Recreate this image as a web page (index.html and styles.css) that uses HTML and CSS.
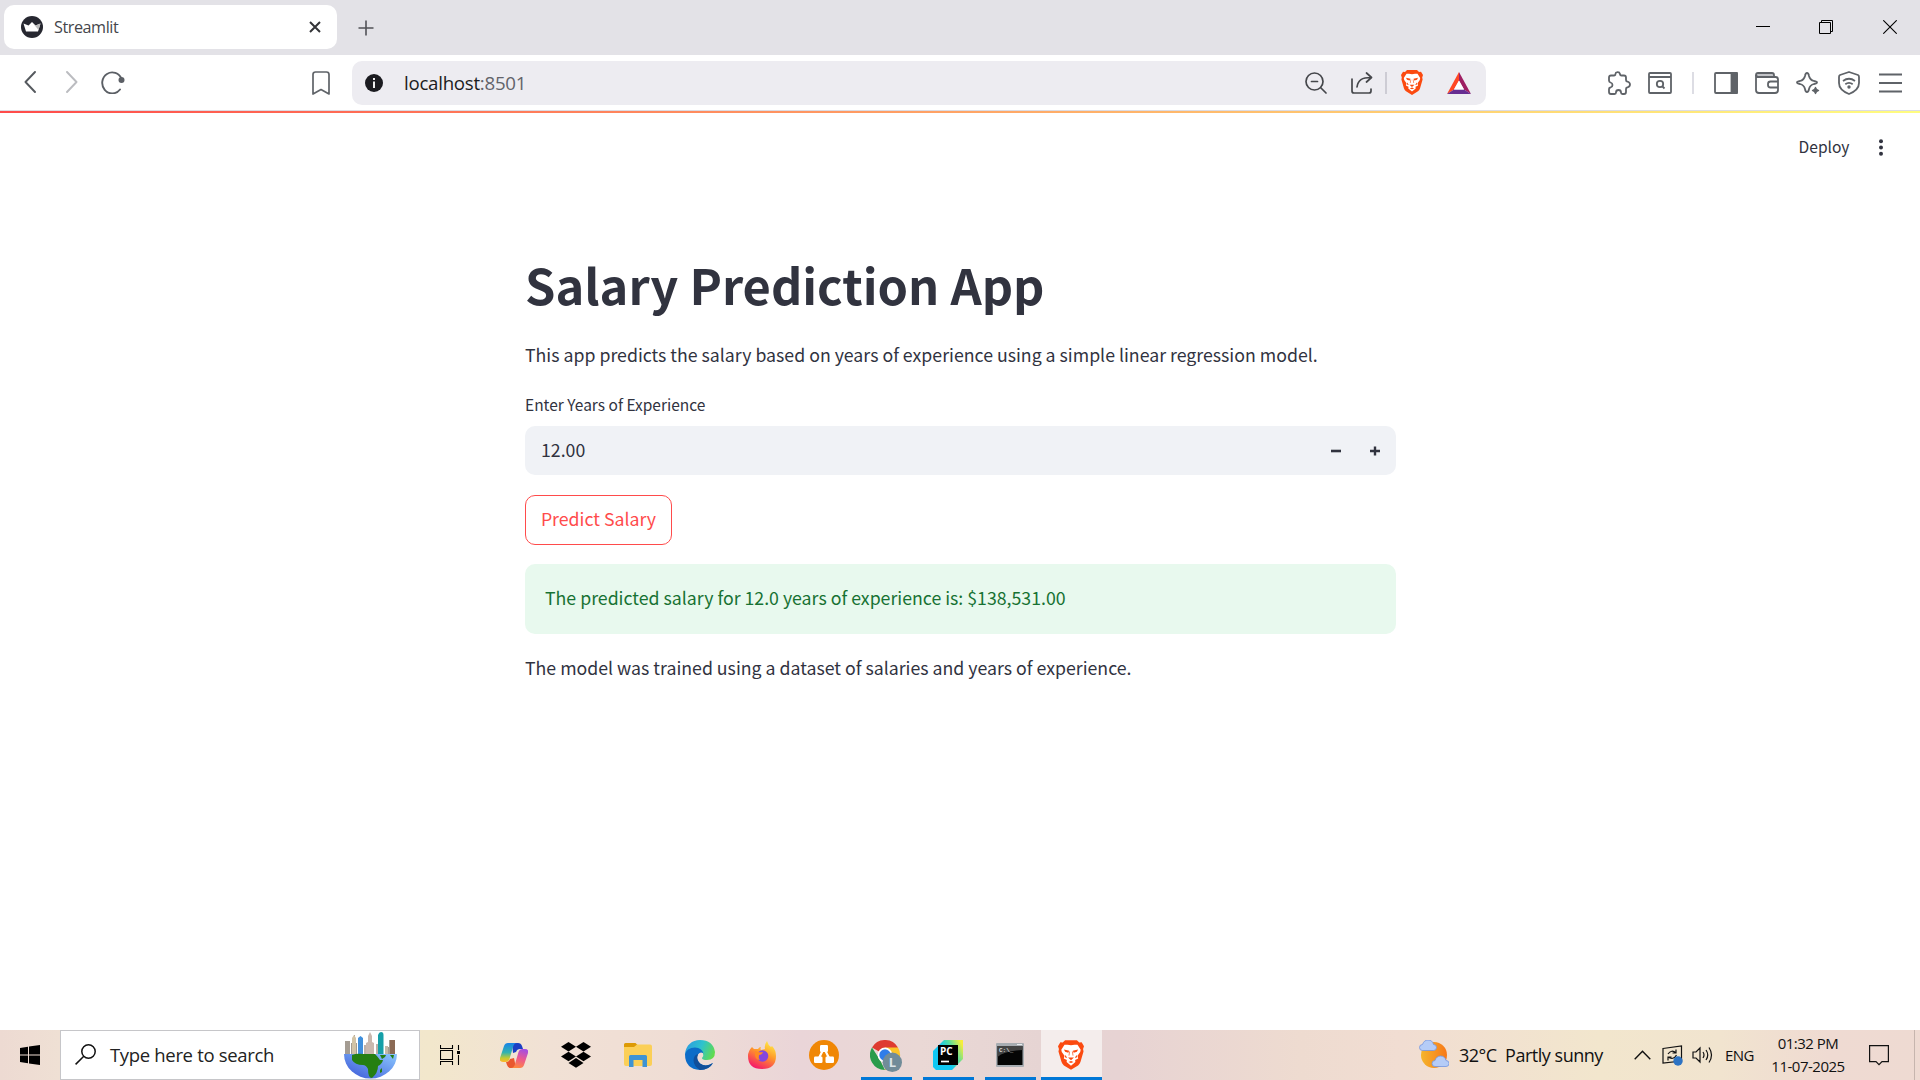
FILE: index.html
```html
<!DOCTYPE html>
<html lang="en">
<head>
<meta charset="utf-8">
<title>Streamlit</title>
<link rel="stylesheet" href="styles.css">
</head>
<body>
<div class="screen">
  <header class="tabstrip">
    <div class="tab">
      <svg class="favicon" width="22" height="22" viewBox="0 0 22 22"><circle cx="11" cy="11" r="11" fill="#262730"/><path d="M2.500 7.500 7.500 9.500 11 6l3.500 3.500 5-2L17 15.500H5Z" fill="#fff"/><path d="M11 6l3.500 3.500 5-2L17.500 14Z" fill="#bbb"/></svg>
      <span class="tab-title">Streamlit</span>
      <svg class="tab-close" width="12" height="12" viewBox="0 0 12 12"><path d="M1 1l10 10M11 1 1 11" stroke="#333438" stroke-width="2"/></svg>
    </div>
    <svg class="newtab" width="16" height="16" viewBox="0 0 16 16"><path d="M8 .5v15M.5 8h15" stroke="#515257" stroke-width="1.600"/></svg>
    <div class="winctl">
      <svg width="14" height="14" viewBox="0 0 14 14"><path d="M0 6.500h14" stroke="#000"/></svg>
      <svg width="14" height="14" viewBox="0 0 14 14" fill="none" stroke="#000"><path d="M.5 2.500h11v11H.5zM2.500 2.500v-2h11v11h-2"/></svg>
      <svg width="14" height="14" viewBox="0 0 14 14"><path d="M.3.3l13.400 13.400M13.700.3.3 13.700" stroke="#000" stroke-width="1.100"/></svg>
    </div>
  </header>

  <nav class="toolbar">
    <svg class="t-back" width="12" height="22" viewBox="0 0 12 22" fill="none" stroke="#55595e" stroke-width="1.900" stroke-linecap="round" stroke-linejoin="round"><path d="M11 1 1.500 11 11 21"/></svg>
    <svg class="t-fwd" width="12" height="22" viewBox="0 0 12 22" fill="none" stroke="#bbbcc0" stroke-width="1.900" stroke-linecap="round" stroke-linejoin="round"><path d="M1 1l9.500 10L1 21"/></svg>
    <svg class="t-reload" width="24" height="24" viewBox="0 0 24 24" fill="none" stroke="#5b5f65" stroke-width="1.900" stroke-linecap="round"><path d="M20.500 9A10 10.500 0 1 0 19 19.500"/><circle cx="20.500" cy="10" r="3" fill="#5b5f65" stroke="none"/></svg>
    <svg class="t-mark" width="18" height="24" viewBox="0 0 18 24" fill="none" stroke="#5f6368" stroke-width="1.700" stroke-linejoin="round"><path d="M1 3.500Q1 1 3.500 1h11Q17 1 17 3.500V23l-8-4.500L1 23Z"/></svg>
    <div class="address">
      <svg class="info" width="18" height="18" viewBox="0 0 18 18"><circle cx="9" cy="9" r="9" fill="#1b1b20"/><path d="M9 4v2M9 7.500V14" stroke="#eee" stroke-width="2"/></svg>
      <span class="url">localhost<span class="port">:8501</span></span>
      <svg class="a-zoom" width="22" height="22" viewBox="0 0 22 22" fill="none" stroke="#45474b" stroke-width="1.700" stroke-linecap="round"><circle cx="9.500" cy="9.500" r="8.500"/><path d="M16 16l5 5M6.500 9.500h6"/></svg>
      <svg class="a-share" width="22" height="22" viewBox="0 0 22 22" fill="none" stroke="#45474b" stroke-width="1.700" stroke-linecap="round" stroke-linejoin="round"><path d="M1 7v12q0 2 2 2h15q2 0 2-2v-2M6 15C7 8 11 5.500 20 5.500M15.500 1 20.500 5.500 15.500 10"/></svg>
      <i class="a-sep"></i>
      <svg class="a-brave" width="22" height="25" viewBox="0 0 22 25"><use href="#lion"/></svg>
      <svg class="a-bat" width="24" height="22" viewBox="0 0 24 22"><path d="M12 0 0 22l7-4.500 5-9Z" fill="#ff4724"/><path d="M12 0l12 22-7-4.500-5-9Z" fill="#9e1f63"/><path d="M0 22h24l-7-4.500H7Z" fill="#662d91"/><path d="M12 8.500 7 17.500h10Z" fill="#fff"/></svg>
    </div>
    <div class="tools">
      <svg class="ic-puzzle" width="24" height="24" viewBox="0 0 24 24"><path d="M4 4.500H7q1.500 0 1.300-1.200A2.400 2.400 0 0 1 13 3q0 1.500 1.500 1.500H17q2 0 2 2V9q0 1.300 1.200 1.500 2.800.7 2.800 3T20.200 16.500Q19 16.700 19 18v3q0 2-2 2h-1.500q-1.500 0-1.500-1.500a2.500 2.500 0 0 0-5 0Q9 23 7.500 23H4q-2 0-2-2v-3q0-1.200 1.500-1.500 2-.5 2-2.500t-2-2.500Q2 11 2 9.500v-3q0-2 2-2Z"/></svg>
      <svg class="ic-find" width="24" height="22" viewBox="0 0 24 22"><path d="M2 1h20q1 0 1 1v18q0 1-1 1H2q-1 0-1-1V2q0-1 1-1ZM1 5h22"/><circle cx="12" cy="12" r="3.200"/><path d="M14 14l2.500 2.500"/></svg>
      <i class="tool-sep"></i>
      <svg class="ic-side" width="24" height="22" viewBox="0 0 24 22"><rect x="1" y="1" width="22" height="20" rx="1"/><path d="M17.500 1H23v20h-5.500Z" fill="#5f6368"/></svg>
      <svg class="ic-wallet" width="24" height="22" viewBox="0 0 24 22"><path d="M1 3q0-2 2-2h14q2 0 2 2v2H2Z" fill="#c3c4c8"/><path d="M1 3v15q0 3 3 3h16q3 0 3-3V7.500Q23 5 20.500 5H3Q1 5 1 3M23 9.500h-7.500q-2.500 0-2.500 2.500v1q0 2.500 2.500 2.500H23Z"/></svg>
      <svg class="ic-spark" width="24" height="24" viewBox="0 0 24 24"><path d="M11 2q1.500 0 2 3 1 4 5 5 3 .5 3 1.500T18 13q-4 1-5 5-.5 3-2 3t-2-3q-1-4-5-5-3-.5-3-1.500T4 10q4-1 5-5 .5-3 2-3Z"/><path d="M19.500 15.500l1.200 2.800 2.800 1.200-2.800 1.200-1.200 2.800-1.200-2.800-2.800-1.200 2.800-1.200Z" fill="#5f6368" stroke="#fff" stroke-width="3" paint-order="stroke"/><path d="M19.500 16l1 2.500 2.500 1-2.500 1-1 2.500-1-2.500-2.500-1 2.500-1Z" fill="#5f6368" stroke-width="1"/></svg>
      <svg class="ic-shield" width="22" height="24" viewBox="0 0 22 24"><path d="M11 1l9 3q1 .5 1 2v6q0 7-10 11Q1 19 1 12V6q0-1.500 1-2ZM5 10q6-4.500 12 0M7.300 13.200q3.700-2.700 7.400 0"/><circle cx="11" cy="16" r=".8"/></svg>
      <svg class="ic-menu" width="23" height="20" viewBox="0 0 23 20"><path d="M0 1.500h23M0 10h23M0 18.500h23"/></svg>
    </div>
  </nav>

  <main class="app">
    <div class="appbar">
      <span class="deploy">Deploy</span>
      <svg width="4" height="17" viewBox="0 0 4 17" fill="#31333f"><circle cx="2" cy="2.200" r="2"/><circle cx="2" cy="8.500" r="2"/><circle cx="2" cy="14.800" r="2"/></svg>
    </div>
    <section class="column">
      <h1>Salary Prediction App</h1>
      <p class="intro">This app predicts the salary based on years of experience using a simple linear regression model.</p>
      <label class="label">Enter Years of Experience</label>
      <div class="number">
        <span class="value">12.00</span>
        <svg width="10" height="10" viewBox="0 0 10 10"><path d="M0 5h10" stroke="#31333f" stroke-width="2.600"/></svg>
        <svg width="10" height="10" viewBox="0 0 10 10"><path d="M0 5h10M5 .5v9" stroke="#31333f" stroke-width="2.400"/></svg>
      </div>
      <button class="predict">Predict Salary</button>
      <div class="alert"><span>The predicted salary for 12.0 years of experience is: $138,531.00</span></div>
      <p class="outro">The model was trained using a dataset of salaries and years of experience.</p>
    </section>
  </main>

  <footer class="taskbar">
    <div class="start"><svg width="20" height="20" viewBox="0 0 20 20"><path d="M0 3l8-1.200V9.500H0ZM9 1.600 20 0v9.500H9ZM0 10.500h8v7.800L0 17ZM9 10.500h11V20L9 18.400Z"/></svg></div>
    <div class="search">
      <svg class="s-lens" width="21" height="21" viewBox="0 0 21 21" fill="none" stroke="#111" stroke-width="1.500"><circle cx="13.500" cy="7.500" r="6.700"/><path d="M8.800 12.200.6 20.400"/></svg>
      <span class="s-text">Type here to search</span>
      <svg class="s-globe" width="54" height="48" viewBox="0 0 54 48">
        <defs><linearGradient id="sea" x1="0" x2="1" y1="1" y2="0"><stop offset="0" stop-color="#3a55d6"/><stop offset="1" stop-color="#8cc8ff"/></linearGradient></defs>
        <path d="M2 23V10h5v13M8 23V12h3V4h1v8h2v11M44 23v-7h2V9h6v14" fill="#a49c92"/>
        <path d="M9 23V7l2-3 2 3v16Z" fill="#d2c3a6"/><path d="M15 23V7l2.500-2L20 7v16Z" fill="#3f8fdc"/><path d="M21 23v-9h5v9M33 23V13h4v10" fill="#bdb0a8"/><path d="M23 23V12l2-1V5l2-4 2 4v6l2 1v11Z" fill="#c9b8ae"/><path d="M35 23V4q1-3 3-3 2.500 0 2.500 3v19Z" fill="#159fa8"/><path d="M42 23v-8h3v8" fill="#c5b9a8"/><path d="M47 23V9h5v14" fill="#8b6a55"/>
        <path d="M1 23h53a26.500 24.500 0 0 1-53 0Z" fill="url(#sea)"/>
        <path d="M9 24q5-2 11-1l12 0q3 3 5 6 2 0 3 0-1 4-5 6 0 7-6 12-4 0-4-9-2-4-5-4-8 0-11-5Z" fill="#257f12"/><path d="M37 24h6l-1 2-3 2ZM47 24h4l-1 4ZM37 39l2-2 0 4-2 1Z" fill="#257f12"/>
      </svg>
    </div>
    <div class="apps">
      <div class="app-btn taskview"><svg width="20" height="20" viewBox="0 0 20 20" fill="none" stroke="#000" stroke-width="1.100"><path d="M.5 0v3.500h12V0M.5 5.500h12v9H.5ZM.5 20v-3.500h12V20M18.500 0v5M18.500 10v10"/><path d="M17 6h3v3h-3Z" fill="#000" stroke="none"/></svg></div>
      <div class="app-btn"><svg width="28" height="25" viewBox="0 0 28 25">
        <defs><linearGradient id="c1" x1="0" x2="0" y1="0" y2="1"><stop offset="0" stop-color="#1783e8"/><stop offset=".5" stop-color="#32b3b0"/><stop offset=".8" stop-color="#c5cb30"/><stop offset="1" stop-color="#ffb72c"/></linearGradient><linearGradient id="c2" x1=".6" x2=".3" y1="0" y2="1"><stop offset="0" stop-color="#a64ee0"/><stop offset=".5" stop-color="#ee5a8c"/><stop offset="1" stop-color="#ff8a3c"/></linearGradient></defs>
        <path d="M12 0h6q3 0 4 3l1 3h-3q-3 0-4 3l-3 1Z" fill="#1b3fc4"/><path d="M16 25h-6q-2 0-3-3l-1-3q3 0 4-3l4-1Z" fill="#e9582f"/>
        <path d="M8 0h9q-3 0-4 4L9.500 16q-1 3-4 3H3q-4 0-3-4L4 3q1-3 4-3Z" fill="url(#c1)"/><path d="M20 25h-9q3 0 4-4L18.500 9q1-3 4-3H25q4 0 3 4l-4 12q-1 3-4 3Z" fill="url(#c2)"/></svg></div>
      <div class="app-btn"><svg width="30" height="26" viewBox="0 0 30 26"><path d="M7.500 0 15 4.700 7.500 9.500 0 4.700ZM22.500 0 30 4.700l-7.500 4.800L15 4.700ZM7.500 9.700 15 14.500l-7.500 4.800L0 14.500ZM22.500 9.700l7.500 4.800-7.500 4.800L15 14.500ZM15 16l7.500 4.900L15 25.700l-7.500-4.800Z"/></svg></div>
      <div class="app-btn"><svg class="folder" width="28" height="24" viewBox="0 0 28 24"><path d="M0 1.500Q0 0 1.500 0h10L14 2.500 11.500 5H0Z" fill="#dd9a05"/><path d="M0 4h10l3-2.500h13q2 0 2 2V21q0 2-2 2H2q-2 0-2-2Z" fill="#fbcf57"/><path d="M5 24V13.500Q5 12 6.500 12h15q1.500 0 1.500 1.500V24h-4.500v-7h-9v7Z" fill="#3e93d4"/></svg></div>
      <div class="app-btn"><svg width="30" height="30" viewBox="0 0 30 30">
        <defs><linearGradient id="e1" x1="0" x2="1" y1=".3" y2=".6"><stop offset="0" stop-color="#2c9de0"/><stop offset=".5" stop-color="#2ec2ce"/><stop offset="1" stop-color="#62dc4b"/></linearGradient></defs>
        <path d="M0 14C1 5 7 0 15 0q13 0 15 12 0 8-8 8-5 0-5-2 2-2 1-5L9 8Z" fill="url(#e1)"/><path d="M0 14Q2 7.500 10 7.500q7 .5 8.500 6-3-2.500-5.500 1-3 5 2 9 6 4 13-.5-4 7-13 7Q0 29 0 14Z" fill="#0c6cc8"/><path d="M13 14q-4 1-4.500 6 0 6 6.500 10 9 0 13-7-7 4.500-13 .5-4-4-2-9.500Z" fill="#114f9a"/></svg></div>
      <div class="app-btn"><svg width="28" height="28" viewBox="0 0 28 28">
        <defs><linearGradient id="f1" x1=".8" x2=".3" y1="0" y2="1"><stop offset="0" stop-color="#fff04a"/><stop offset=".45" stop-color="#ff9a2a"/><stop offset="1" stop-color="#f5156c"/></linearGradient></defs>
        <path d="M4 6l2 2h4q1-2 3-2-1 2 0 3l4-1q-1-4 2-8 1 4 4 6l1-1q4 4 4 10 0 13-14 13T0 15q0-5 4-9Z" fill="url(#f1)"/><circle cx="14.500" cy="15" r="5.800" fill="#8545dc"/><path d="M7 10q4 2 8 1-1 3-4 3-1 3 1 5-6 0-5-9Z" fill="#ff8a22"/></svg></div>
      <div class="app-btn"><svg width="30" height="30" viewBox="0 0 30 30"><circle cx="15" cy="15" r="15" fill="#f08705"/><path d="M15 8 9 20M15 8l6 12" stroke="#fff" stroke-width="2.200"/><rect x="11" y="5" width="8" height="7" rx="1.200" fill="#fff"/><rect x="5" y="16.500" width="8.500" height="6.500" rx="1.200" fill="#fff"/><rect x="16.500" y="16.500" width="8.500" height="6.500" rx="1.200" fill="#fff"/></svg></div>
      <div class="app-btn running"><svg class="chrome" width="32" height="32" viewBox="0 0 32 32"><path d="M15 15 2 7.500a15 15 0 0 1 26 0Z" fill="#de3b30"/><path d="M15 15V7.500h13A15 15 0 0 1 15 30Z" fill="#fbc428"/><path d="M2 7.500 10 20l5 10A15 15 0 0 1 2 7.500Z" fill="#2a9c4b"/><circle cx="15" cy="15" r="7.400" fill="#fff"/><circle cx="15" cy="15" r="5.700" fill="#2f7de9"/><circle cx="22.300" cy="22.300" r="9.700" fill="#718c99"/><text x="18.800" y="27" class="badge">L</text></svg></div>
      <div class="app-btn running"><svg width="30" height="30" viewBox="0 0 30 30">
        <defs><linearGradient id="p1" x1=".2" x2="1" y1=".6" y2=".2"><stop offset=".25" stop-color="#10c7f2"/><stop offset=".6" stop-color="#58dd9c"/><stop offset="1" stop-color="#f6ee3a"/></linearGradient></defs>
        <path d="M0 11 11 0h19v19L19 30H3l-3-3Z" fill="url(#p1)"/><rect x="5" y="5" width="20" height="20"/><path d="M8 21.500h8" stroke="#fff" stroke-width="1.700"/><text x="7" y="15" class="pc">PC</text></svg></div>
      <div class="app-btn running"><svg width="28" height="24" viewBox="0 0 28 24"><rect width="28" height="24" rx="1" fill="#a8adb2"/><rect x="1.500" y="3" width="25" height="19" fill="#050505"/><path d="M1.500 3h25v4Q8 8 1.500 14Z" fill="#444"/><path d="M21 1.500h5" stroke="#e9edf0"/><text x="3" y="9" class="cmd">C:\_</text></svg></div>
      <div class="app-btn running active"><svg width="26" height="30" viewBox="0 0 22 25"><g id="lion"><path d="M6 0h10l2 2 2-.2L22 5l-.8 2.500.4 2-2.600 9q-.5 1.700-2 2.800L11 25l-6-3.700q-1.500-1.100-2-2.800l-2.600-9 .4-2L0 5l2-3.200L4 2Z" fill="#fb4a10"/><path d="M8 3.800l3 .5 3-.5h2.500L19.200 8l-.4 2-2.300 3.200.6 2.300-2.600 1.300.2 1.700L11 21.500l-3.700-3 .2-1.700L4.900 15.500l.6-2.300L3.200 10 2.800 8l2.700-4.200Z" fill="#fff"/><path d="M5 7.800l4.500 1L8.700 10.500 6 9.800ZM17 7.800l-4.500 1 .8 1.700 2.700-.7ZM8.500 14.700h5L11 17ZM6.300 12.500l1.500 2.500-2-.5ZM15.700 12.500l-1.500 2.500 2-.5ZM8.800 18.500 11 17.600l2.200.9L11 19.200Z" fill="#fb4a10"/><path d="M9.800 9.500 9.300 13M12.200 9.500l.5 3.500" stroke="#fb4a10" stroke-width=".6"/></g></svg></div>
    </div>
    <div class="tray">
      <svg class="weather" width="30" height="28" viewBox="0 0 30 28"><defs><linearGradient id="sun" x1="0" x2="1"><stop offset="0" stop-color="#f5b52c"/><stop offset="1" stop-color="#f77818"/></linearGradient></defs><circle cx="15" cy="15" r="13" fill="url(#sun)"/><path id="cloud" d="M3.500 10.500a3 3 0 0 1 0-6Q5 0 9 0q4.500 0 5.500 4.500a3 3 0 0 1 0 6Z" fill="#b5ccf7" stroke="#7396df" stroke-width=".8"/><use href="#cloud" x="12.500" y="16"/></svg>
      <span class="w-text">32°C&nbsp; Partly sunny</span>
      <svg class="chev" width="17" height="10" viewBox="0 0 17 10" fill="none" stroke="#111" stroke-width="1.400"><path d="M.7 9.300 8.500 1.200l7.800 8.100"/></svg>
      <svg class="sync" width="21" height="21" viewBox="0 0 21 21" fill="none" stroke="#111" stroke-width="1.200"><path d="M1 3.500 19.500 1v15L1 18ZM6 9q3.500-5 8-1M14 4.500V8h-3.500M14.500 10q-3 5.500-8.500 2M6 15.500V12h3.500"/><circle cx="16" cy="16" r="4.700" fill="#2c73c4" stroke="none"/></svg>
      <svg class="vol" width="21" height="18" viewBox="0 0 21 18" fill="none" stroke="#111" stroke-width="1.200"><path d="M1 6h3l4-4v14l-4-4H1ZM11 6q2 3 0 6M14 4q3.500 5 0 10M17 1.500q5 7.500 0 15"/></svg>
      <span class="lang">ENG</span>
      <div class="clock"><span class="time">01:32 PM</span><span class="date">11-07-2025</span></div>
      <svg class="note" width="20" height="21" viewBox="0 0 20 21" fill="none" stroke="#111" stroke-width="1.200"><path d="M.6.6h18.800v16H13l-3 3-3-3H.6Z"/></svg>
      <i class="peek"></i>
    </div>
  </footer>
</div>
</body>
</html>
```
FILE: styles.css
```css
* { box-sizing: border-box; }
body { margin: 0; background: #fff; }
svg { display: block; flex: none; }
.screen { width: 1920px; height: 1080px; display: flex; flex-direction: column; overflow: hidden; font-family: "Open Sans", "Noto Sans", sans-serif; }

.tabstrip { height: 55px; background: #e3e2e7; display: flex; align-items: center; padding-left: 4px; flex: none; }
.tab { width: 333px; height: 44px; margin-bottom: 1px; background: #fff; border-radius: 10px; display: flex; align-items: center; padding: 0 16px 0 17px; }
.tab-title { font-size: 16.200px; letter-spacing: -.45px; color: #45464b; margin-left: 11px; flex: 1; }
.newtab { margin-left: 21px; }
.winctl { margin-left: auto; display: flex; gap: 49px; padding: 0 23px 2px 0; }
.winctl svg:last-child { margin-left: 1px; }

.toolbar { height: 56px; border-bottom: 1px solid #dcdce4; display: flex; align-items: center; padding-left: 24px; flex: none; }
.t-back, .t-fwd, .t-reload { margin-bottom: 1px; }
.t-fwd { margin-left: 30px; }
.t-reload { margin-left: 23px; }
.t-mark { margin-left: 187px; }
.address { width: 1134px; height: 44px; margin-left: 22px; border-radius: 10px; background: #edecf1; display: flex; align-items: center; padding-left: 13px; }
.url { margin-left: 21px; font-size: 18.700px; letter-spacing: -.27px; color: #1b1b20; }
.port { color: #62636a; }
.a-zoom { margin-left: auto; }
.a-share { margin-left: 24px; }
.a-sep { width: 2px; height: 22px; background: #cdccd4; margin-left: 12px; }
.a-brave { margin-left: 14px; }
.a-bat { margin: 0 15px 0 24px; }
.tools { display: flex; align-items: center; margin-left: 121px; }
.tools svg { fill: none; stroke: #5f6368; stroke-width: 1.800; stroke-linejoin: round; }
.ic-find { margin-left: 17px; }
.tool-sep { width: 2px; height: 22px; background: #dddde4; margin: 0 20px; }
.ic-wallet, .ic-spark { margin-left: 17px; }
.ic-shield { margin-left: 18px; }
.ic-menu { margin-left: 19px; }

.app { flex: 1; min-height: 0; color: #31333f; font-family: "Noto Sans CJK SC", sans-serif; border-top: 2px solid; border-image: linear-gradient(90deg, #ff4b4b, #fffd80) 1; }
.appbar { height: 69px; display: flex; justify-content: flex-end; align-items: center; padding-right: 37px; }
.deploy { font-size: 15.600px; line-height: 28px; margin: 0 29.500px 3px 0; }
.column { width: 871px; margin: 68px 0 0 525px; font-size: 17.730px; line-height: 32px; display: flex; flex-direction: column; align-items: flex-start; }
h1 { margin: 1px 0 -1px; font-size: 48.750px; line-height: 66px; font-weight: 700; white-space: nowrap; }
.intro, .outro { margin: 22px 0 0; white-space: nowrap; }
.label { font-size: 15.500px; line-height: 28px; margin-top: 20px; }
.number { align-self: stretch; height: 49px; margin-top: 8px; border-radius: 10px; background: #f0f2f6; display: flex; align-items: center; gap: 29px; padding: 0 16px; }
.value { flex: 1; padding-bottom: 3px; }
.predict { width: 147px; height: 50px; margin-top: 20px; padding: 0 0 4px; border: 1px solid #ff4b4b; border-radius: 10px; background: #fff; color: #ff4b4b; font: inherit; white-space: nowrap; }
.alert { align-self: stretch; height: 70px; margin-top: 19px; padding: 0 20px; border-radius: 10px; background: #e8f9ee; color: #177233; line-height: 67px; }
.outro { margin-top: 17px; }

.taskbar { height: 50px; flex: none; display: flex; color: #111; background: linear-gradient(90deg, #eddad2 0, #efe0d4 60px, #f2e7cc 430px, #f1e1d5 550px, #efddd5 680px, #ead5d8 800px, #ead8d5 920px, #e6d4d3 1040px, #e7d3d3 1120px, #eedbd0 1300px, #f1ddd2 1400px, #f2e6cd 1600px, #f1e4cf 1720px, #efdad2 1830px, #eedad2 1920px); }
.start { width: 60px; display: flex; align-items: center; justify-content: center; }
.search { width: 360px; height: 50px; background: #fff; border: 1px solid #c6c6c9; display: flex; align-items: center; padding: 0 22px 0 14px; }
.s-lens { margin-bottom: 1px; }
.s-text { margin: 0 0 2px 14px; font-size: 18.500px; letter-spacing: -.33px; color: #222; white-space: nowrap; }
.s-globe { margin-left: auto; }
.apps { display: flex; }
.app-btn { width: 52px; margin: 0 5px; padding-right: 2px; display: flex; align-items: center; justify-content: center; }
.running { border-bottom: 3px solid #0078d7; padding-top: 3px; width: 51px; margin-right: 6px; }
.chrome { margin-top: 2px; }
.taskview { margin: 0 8px 0 4px; padding-right: 0; }
.active { width: 61px; margin-left: -1px; background-color: #f4edec; }
.badge { font: 700 13px "Open Sans", sans-serif; fill: #dce6ea; }
.pc { font: 700 10px "Open Sans", sans-serif; fill: #fff; }
.cmd { font: 700 6px "Liberation Mono", monospace; fill: #ddd; }
.tray { margin-left: auto; display: flex; align-items: center; white-space: nowrap; }
.weather { margin: 0 1px 2px -1px; }
.w-text { font-size: 18px; letter-spacing: -.48px; margin-left: 9px; width: 146px; }
.chev { margin-left: 29px; }
.sync { margin-left: 11px; }
.vol { margin-left: 9px; }
.lang { font-size: 15px; letter-spacing: -.6px; margin-left: 12px; width: 29px; }
.clock { width: 76px; margin-left: 16px; display: flex; flex-direction: column; align-items: center; font-size: 15px; line-height: 23px; letter-spacing: -.5px; }
.note { margin-left: 23px; }
.peek { width: 1px; height: 50px; margin: 0 5px 0 25px; background: #c6b5ae; }
```
